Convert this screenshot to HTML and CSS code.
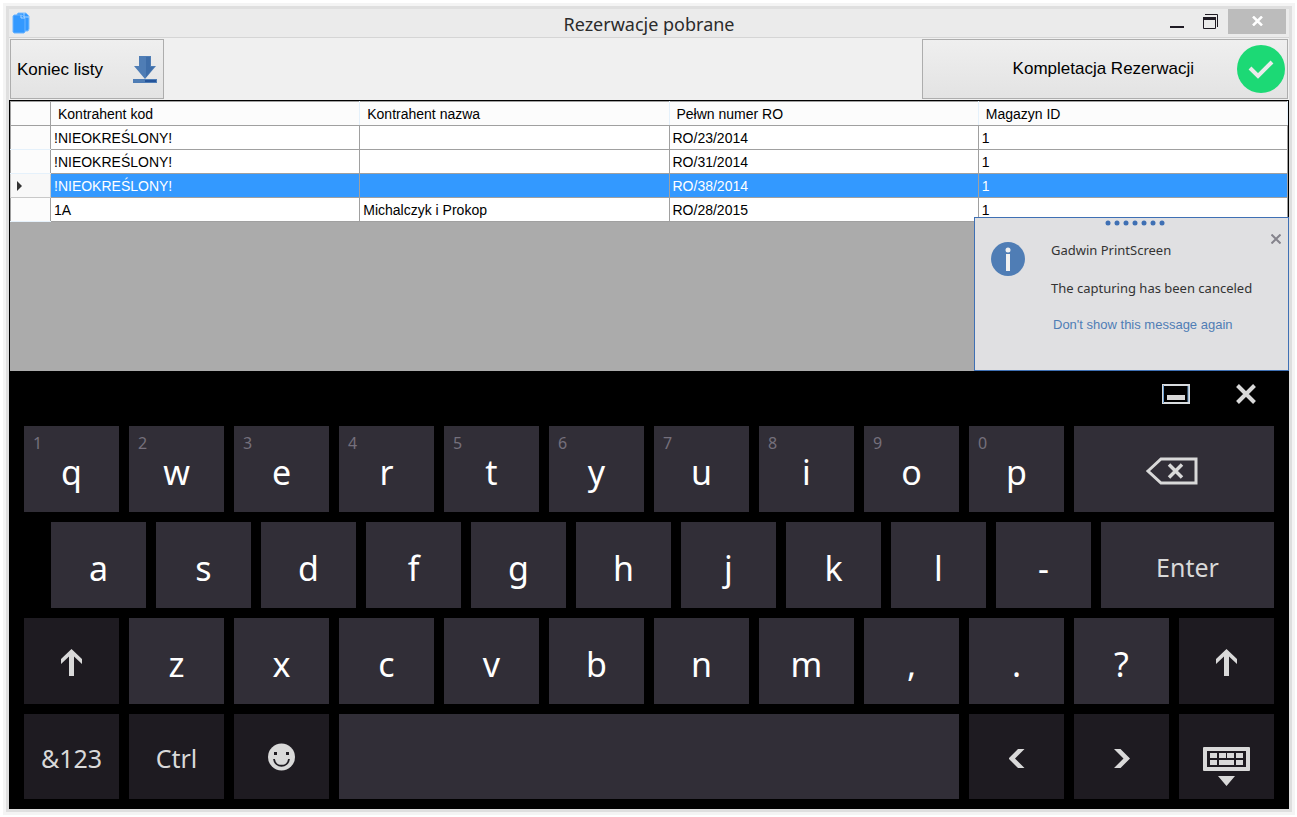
FILE: index.html
```html
<!DOCTYPE html>
<html lang="pl">
<head>
<meta charset="utf-8">
<title>Rezerwacje pobrane</title>
<link rel="stylesheet" href="styles.css">
</head>
<body>
<main class="window">
  <header class="titlebar">
    <svg class="app-icon" width="20" height="22" viewBox="0 0 20 22" aria-hidden="true">
      <path d="M5 2 6 1h8l3 3v13l-1 2H5z" fill="#3399ff" stroke="#7fbfff" stroke-width="1"/>
      <path d="M1 4l1-1h8l3 3v14l-1 1H2l-1-1z" fill="#3399ff" stroke="#6cb4ff" stroke-width="1"/>
      <path d="M9 3v3h4M12 1v4h5" fill="none" stroke="#a9d4ff" stroke-width="1"/>
    </svg>
    <h1 class="title">Rezerwacje pobrane</h1>
    <div class="window-controls">
      <button class="win-btn" type="button" aria-label="Minimalizuj">
        <svg width="14" height="16" viewBox="0 0 14 16"><path d="M0 13h14" stroke="#1f1b24" stroke-width="2"/></svg>
      </button>
      <button class="win-btn" type="button" aria-label="Przywróć">
        <svg width="16" height="16" viewBox="0 0 16 16" fill="none" stroke="#1f1b24"><path d="M2 .5h12.500V13" stroke-width="1"/><path d="M.5 3v11.500h12V3"/><path d="M0 4.500h13" stroke-width="3"/></svg>
      </button>
      <button class="win-btn win-close" type="button" aria-label="Zamknij">
        <svg width="11" height="10" viewBox="0 0 11 10"><path d="M1 .5l9 9M10 .5l-9 9" stroke="#fff" stroke-width="2.500"/></svg>
      </button>
    </div>
  </header>

  <div class="toolbar">
    <button class="tool tool-end" type="button">
      <span>Koniec listy</span>
      <svg width="24" height="28" viewBox="0 0 24 28" aria-hidden="true"><path d="M6 0h12v10h5L12 23 1 10h5z" fill="#4f7db5"/><path d="M13 1h4v10h4l-8 10z" fill="#3f6ea9"/><path d="M0 23h24v4H0z" fill="#4f7db5"/><path d="M12 24h11v2H12z" fill="#24549a"/></svg>
    </button>
    <button class="tool tool-complete" type="button">
      <span>Kompletacja Rezerwacji</span>
      <svg width="48" height="48" viewBox="0 0 48 48" aria-hidden="true"><circle cx="24" cy="24" r="24" fill="#1cd975"/><path d="M13 23l8 8 14-14" fill="none" stroke="#ebebeb" stroke-width="4"/></svg>
    </button>
  </div>

  <section class="grid-area">
    <table class="grid">
      <colgroup><col class="col-marker"><col><col><col><col></colgroup>
      <thead>
        <tr><th></th><th scope="col">Kontrahent kod</th><th scope="col">Kontrahent nazwa</th><th scope="col">Pełwn numer RO</th><th scope="col">Magazyn ID</th></tr>
      </thead>
      <tbody>
        <tr><td class="marker"></td><td>!NIEOKREŚLONY!</td><td></td><td>RO/23/2014</td><td>1</td></tr>
        <tr><td class="marker"></td><td>!NIEOKREŚLONY!</td><td></td><td>RO/31/2014</td><td>1</td></tr>
        <tr class="selected"><td class="marker"><svg width="6" height="10" viewBox="0 0 6 10" aria-hidden="true"><path d="M0 0l5 5-5 5z" fill="#333"/></svg></td><td>!NIEOKREŚLONY!</td><td></td><td>RO/38/2014</td><td>1</td></tr>
        <tr><td class="marker"></td><td>1A</td><td>Michalczyk i Prokop</td><td>RO/28/2015</td><td>1</td></tr>
      </tbody>
    </table>

    <aside class="toast">
      <svg class="toast-grip" width="60" height="6" viewBox="0 0 60 6" fill="#3f70b4" aria-hidden="true"><circle cx="3" cy="3" r="2.500"/><circle cx="12" cy="3" r="2.500"/><circle cx="21" cy="3" r="2.500"/><circle cx="30" cy="3" r="2.500"/><circle cx="39" cy="3" r="2.500"/><circle cx="48" cy="3" r="2.500"/><circle cx="57" cy="3" r="2.500"/></svg>
      <svg class="toast-icon" width="34" height="34" viewBox="0 0 34 34" aria-hidden="true"><circle cx="17" cy="17" r="17" fill="#4f7db5"/><circle cx="17" cy="8" r="2.500" fill="#f0f0f0"/><path d="M15 12h4v17h-4z" fill="#f0f0f0"/></svg>
      <div class="toast-text">
        <p>Gadwin PrintScreen</p>
        <p>The capturing has been canceled</p>
        <a href="#">Don't show this message again</a>
      </div>
      <button class="toast-close" type="button" aria-label="Close"><svg width="10" height="10" viewBox="0 0 10 10"><path d="M.5.5l9 9M9.500.5l-9 9" stroke="#85838c" stroke-width="2"/></svg></button>
    </aside>
  </section>

  <section class="keyboard" aria-label="Klawiatura ekranowa">
    <div class="kb-bar">
      <button class="kb-ctl" type="button" aria-label="Dokuj"><svg width="28" height="20" viewBox="0 0 28 20"><path d="M1 1h26v18H1z" fill="none" stroke="#d9dcdf" stroke-width="2"/><path d="M1.500 1v18M26 2v16" stroke="#6d9fd0" stroke-width="1"/><path d="M5 11h18v5H5z" fill="#d9d9d9"/></svg></button>
      <button class="kb-ctl" type="button" aria-label="Zamknij klawiaturę"><svg width="20" height="20" viewBox="0 0 20 20"><path d="M1.500 1.500l17 17M18.500 1.500l-17 17" stroke="#d9d9d9" stroke-width="4"/></svg></button>
    </div>
    <div class="kb-row">
      <button class="key" type="button"><small>1</small>q</button>
      <button class="key" type="button"><small>2</small>w</button>
      <button class="key" type="button"><small>3</small>e</button>
      <button class="key" type="button"><small>4</small>r</button>
      <button class="key" type="button"><small>5</small>t</button>
      <button class="key" type="button"><small>6</small>y</button>
      <button class="key" type="button"><small>7</small>u</button>
      <button class="key" type="button"><small>8</small>i</button>
      <button class="key" type="button"><small>9</small>o</button>
      <button class="key" type="button"><small>0</small>p</button>
      <button class="key key-icon key-backspace" type="button" aria-label="Backspace"><svg width="52" height="28" viewBox="0 0 52 28" fill="none" stroke="#d9d9d9"><path d="M2 14L15 2h35v24H15z" stroke-width="3"/><path d="M23 7.500l13 13M36 7.500l-13 13" stroke-width="3.500"/></svg></button>
    </div>
    <div class="kb-row kb-row-offset">
      <button class="key" type="button">a</button>
      <button class="key" type="button">s</button>
      <button class="key" type="button">d</button>
      <button class="key" type="button">f</button>
      <button class="key" type="button">g</button>
      <button class="key" type="button">h</button>
      <button class="key" type="button">j</button>
      <button class="key" type="button">k</button>
      <button class="key" type="button">l</button>
      <button class="key" type="button">-</button>
      <button class="key key-word" type="button">Enter</button>
    </div>
    <div class="kb-row">
      <button class="key key-dark key-icon" type="button" aria-label="Shift"><svg width="22" height="28" viewBox="0 0 22 28"><path d="M10.500 0L21 10v5l-8-7.500V27H8V7.500L0 15v-5z" fill="#d9d9d9"/></svg></button>
      <button class="key" type="button">z</button>
      <button class="key" type="button">x</button>
      <button class="key" type="button">c</button>
      <button class="key" type="button">v</button>
      <button class="key" type="button">b</button>
      <button class="key" type="button">n</button>
      <button class="key" type="button">m</button>
      <button class="key" type="button">,</button>
      <button class="key" type="button">.</button>
      <button class="key" type="button">?</button>
      <button class="key key-dark key-icon" type="button" aria-label="Shift"><svg width="22" height="28" viewBox="0 0 22 28"><path d="M10.500 0L21 10v5l-8-7.500V27H8V7.500L0 15v-5z" fill="#d9d9d9"/></svg></button>
    </div>
    <div class="kb-row kb-row-last">
      <button class="key key-dark key-word" type="button">&amp;123</button>
      <button class="key key-dark key-word" type="button">Ctrl</button>
      <button class="key key-dark key-icon key-emoji" type="button" aria-label="Emoji"><svg width="28" height="28" viewBox="0 0 28 28"><circle cx="13.500" cy="14" r="13.500" fill="#d9d9d9"/><path d="M6 9h3v3H6zM18 9h3v3h-3z" fill="#1e1b21"/><path d="M6 16c1 9 14 9 15 0" fill="none" stroke="#1e1b21" stroke-width="1.800"/></svg></button>
      <button class="key key-space" type="button" aria-label="Spacja"></button>
      <button class="key key-dark key-icon" type="button" aria-label="W lewo"><svg width="16" height="20" viewBox="0 0 16 20"><path d="M9 0h6.500L6 9.500l9.500 9.500H9L-.5 9.500z" fill="#d9d9d9"/></svg></button>
      <button class="key key-dark key-icon" type="button" aria-label="W prawo"><svg width="16" height="20" viewBox="0 0 16 20"><path d="M6.500 0H0l9.500 9.500L0 19h6.500L16 9.500z" fill="#d9d9d9"/></svg></button>
      <button class="key key-dark key-icon key-hide" type="button" aria-label="Ukryj klawiaturę"><svg width="48" height="40" viewBox="0 0 48 40"><rect width="47" height="24" rx="1" fill="#d9d9d9"/><path d="M4 4h39v16H4z" fill="#1e1b21"/><path d="M7 6h7v5H7zM16 6h7v5h-7zM24 6h7v5h-7zM33 6h7v5h-7zM7 13h7v5H7zM16 13h15v5H16zM33 13h7v5h-7zM15 29h17l-8.500 10z" fill="#d9d9d9"/></svg></button>
    </div>
  </section>
</main>
</body>
</html>
```

FILE: styles.css
```css
* { box-sizing: border-box; }

body {
  margin: 0;
  padding: 9px 8px 8px 9px;
  min-height: 100vh;
  display: flex;
  background: #fff;
  font-family: "Liberation Sans", Arial, sans-serif;
  color: #000;
}

button {
  margin: 0;
  padding: 0;
  border: 0;
  background: none;
  color: inherit;
  font: inherit;
}

svg { display: block; flex: none; }

.window {
  flex: 1;
  min-width: 0;
  display: flex;
  flex-direction: column;
  background: #ebebeb;
  box-shadow: 0 0 0 3px #dfdfdf, 0 0 0 6px #f4f4f4;
}

/* Title bar */
.titlebar {
  display: grid;
  grid-template-columns: 1fr auto 1fr;
  height: 29px;
  border-bottom: 1px solid #d5d5d5;
}

.app-icon { margin: 3px 0 0 3px; }

.title {
  margin: 0;
  font: 18px/30px "Noto Sans", sans-serif;
  color: #2b2b2b;
}

.window-controls {
  display: flex;
  justify-content: flex-end;
  align-items: flex-start;
  padding-right: 3px;
}

.win-btn {
  width: 34px;
  height: 25px;
  display: grid;
  place-items: center;
}

.win-close { width: 58px; padding-bottom: 2px; background: #bcbcbc; }

/* Toolbar */
.toolbar {
  display: flex;
  justify-content: space-between;
  height: 62px;
  padding: 1px;
  background: #f0f0f0;
}

.tool {
  display: flex;
  align-items: center;
  border: 1px solid #adadad;
  background: linear-gradient(#efefef, #e3e3e3);
  font-size: 17px;
}

.tool-end {
  width: 154px;
  justify-content: space-between;
  padding: 2px 6px 0;
}

.tool-complete {
  width: 366px;
  justify-content: flex-end;
  gap: 43px;
  padding-right: 2px;
}

/* Data grid */
.grid-area {
  position: relative;
  flex: 1;
  min-height: 271px;
  border: solid #000;
  border-width: 1px 1px 0;
  background: #ababab;
}

.grid {
  width: 100%;
  table-layout: fixed;
  border-collapse: collapse;
  font-size: 14px;
  line-height: 16px;
}

.col-marker { width: 40px; }

.grid th,
.grid td {
  height: 24px;
  padding: 0 3px;
  border: 1px solid #a0a0a0;
  background: #fff;
  text-align: left;
  font-weight: 400;
  white-space: nowrap;
}

.grid th {
  padding: 0 7px;
  border-color: #a0a0a0 #e5f1fb;
  background: #fcfcfc;
}

.grid th:first-child { border-color: #a0a0a0; }

.grid .marker {
  padding: 0 6px;
  border-top-color: #e5f1fb;
  border-bottom-color: #e5f1fb;
  background: #fcfcfc;
}

.grid .selected td { background: #3399ff; color: #fff; }
.grid .selected .marker { border-color: #c8c8c8; background: #f8f8f8; }

/* Notification over the grid */
.toast {
  position: absolute;
  right: -1px;
  bottom: 0;
  width: 315px;
  height: 154px;
  display: flex;
  gap: 26px;
  padding: 24px 16px;
  border: 1px solid #3f70b4;
  background: #e0e0e2;
  font: 13px/18px "Noto Sans", sans-serif;
  color: #333;
}

.toast-grip {
  position: absolute;
  top: 2px;
  left: 130px;
}

.toast-text {
  display: flex;
  flex-direction: column;
  gap: 20px;
  margin-top: -1px;
  white-space: nowrap;
}

.toast-text p { margin: 0; }

.toast-text a {
  padding-left: 2px;
  font: 13px/16px "Liberation Sans", Arial, sans-serif;
  color: #4f7db5;
  text-decoration: none;
}

.toast-close {
  position: absolute;
  top: 16px;
  right: 7px;
}

/* On-screen keyboard */
.keyboard {
  display: flex;
  flex-direction: column;
  gap: 10px;
  padding: 0 15px 10px;
  background: #000;
  font-family: "Noto Sans", sans-serif;
  color: #fff;
}

.kb-bar {
  display: flex;
  justify-content: flex-end;
  align-items: center;
  gap: 46px;
  height: 45px;
  padding: 1px 18px 0 0;
}

.kb-row {
  display: grid;
  grid-template-columns: repeat(12, 1fr);
  grid-auto-rows: 86px;
  gap: 10px;
}

.kb-row-offset {
  grid-template-columns: repeat(10, 95fr) 173fr;
  padding-left: 27px;
}

.kb-row-last { grid-auto-rows: 85px; }

.key {
  position: relative;
  min-width: 0;
  padding-top: 6px;
  background: #312e37;
  font-size: 34px;
  line-height: 46px;
}

.key small {
  position: absolute;
  top: 6px;
  left: 9px;
  font-size: 16px;
  line-height: 22px;
  color: #75707c;
}

.key-dark { background: #1e1b21; }

.key-word {
  padding-top: 3px;
  font-size: 25px;
  color: #d9d9d9;
}

.key-icon {
  display: grid;
  place-items: center;
  padding-top: 4px;
}

.key-backspace { grid-column: span 2; padding-right: 5px; }
.key-space { grid-column: span 6; }
.key-emoji { padding-top: 0; }
.key-hide { padding-top: 20px; }
```
